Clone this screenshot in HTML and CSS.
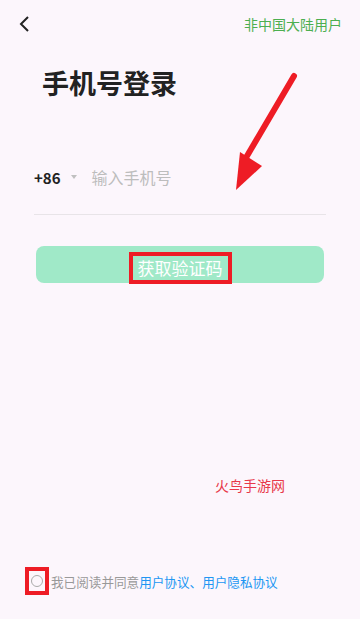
FILE: index.html
```html
<!DOCTYPE html>
<html lang="zh">
<head>
<meta charset="utf-8">
<link rel="stylesheet" href="styles.css">
</head>
<body>
<div class="page">
  <header class="topbar">
    <svg class="back" width="14" height="18" viewBox="0 0 14 18"><path d="M10 2 L3 9 L10 16" fill="none" stroke="#222" stroke-width="2"/></svg>
    <span class="other">非中国大陆用户</span>
  </header>
  <h1 class="title">手机号登录</h1>
  <div class="phone-row">
    <span class="code">+86</span>
    <span class="caret"></span>
    <span class="placeholder">输入手机号</span>
  </div>
  <div class="btn"><span class="btn-text">获取验证码</span></div>
  <div class="spacer"></div>
  <div class="watermark">火鸟手游网</div>
  <div class="agree">
    <span class="check-box"><span class="circle"></span></span>
    <span class="agree-text">我已阅读并同意<span class="link">用户协议、用户隐私协议</span></span>
  </div>
  <svg class="arrow" width="80" height="120" viewBox="0 0 80 120"><line x1="72" y1="6" x2="25" y2="86" stroke="#ee1c25" stroke-width="6" stroke-linecap="round"/><polygon points="14,120 18,82 40,96" fill="#ee1c25"/></svg>
</div>
</body>
</html>
```
FILE: styles.css
```css
html, body { margin: 0; padding: 0; }
body { background: #fcf6fc; font-family: "Noto Sans CJK SC", "Noto Sans", sans-serif; }
.page { position: relative; width: 360px; height: 619px; display: flex; flex-direction: column; }
.topbar { display: flex; justify-content: space-between; align-items: center; height: 50px; padding: 0 18px 0 18px; }
.back { margin-top: -2px; }
.other { color: #4caf50; font-size: 14px; margin-top: -2px; }
.title { margin: 16px 0 0 42px; font-size: 27px; font-weight: 700; color: #222; line-height: 34px; }
.phone-row { display: flex; align-items: center; margin: 51px 34px 0 34px; height: 52px; border-bottom: 1px solid #e8e4e8; padding-bottom: 11px; }
.code { font-size: 15px; font-weight: 700; color: #222; }
.caret { width: 0; height: 0; border-left: 3px solid transparent; border-right: 3px solid transparent; border-top: 4px solid #c0c0c0; margin: 0 15px 0 10px; }
.placeholder { font-size: 16px; color: #bdbdbd; }
.btn { margin: 31px 36px 0 36px; height: 37px; background: #a0e9c8; border-radius: 8px; display: flex; justify-content: center; align-items: center; }
.btn-text { color: #fff; font-size: 17px; border: 4px solid #ee1c25; padding: 0 5px; line-height: 24px; margin-top: 6px; }
.spacer { flex: 1; }
.watermark { color: #e8394a; font-size: 14px; font-family: "Noto Sans CJK SC", sans-serif; margin: 0 0 72px 215px; }
.agree { display: flex; align-items: center; margin: 0 0 24px 25px; }
.check-box { width: 24px; height: 28px; background: #ee1c25; display: flex; justify-content: center; align-items: center; }
.circle { width: 16px; height: 20px; background: #fcf6fc; display: flex; justify-content: center; align-items: center; }
.circle::before { content: ""; width: 10px; height: 10px; border: 1px solid #aaa; border-radius: 50%; }
.agree-text { font-size: 12.6px; color: #999; margin-left: 2px; }
.link { color: #2196f3; }
.arrow { position: absolute; left: 222px; top: 70px; }
```
